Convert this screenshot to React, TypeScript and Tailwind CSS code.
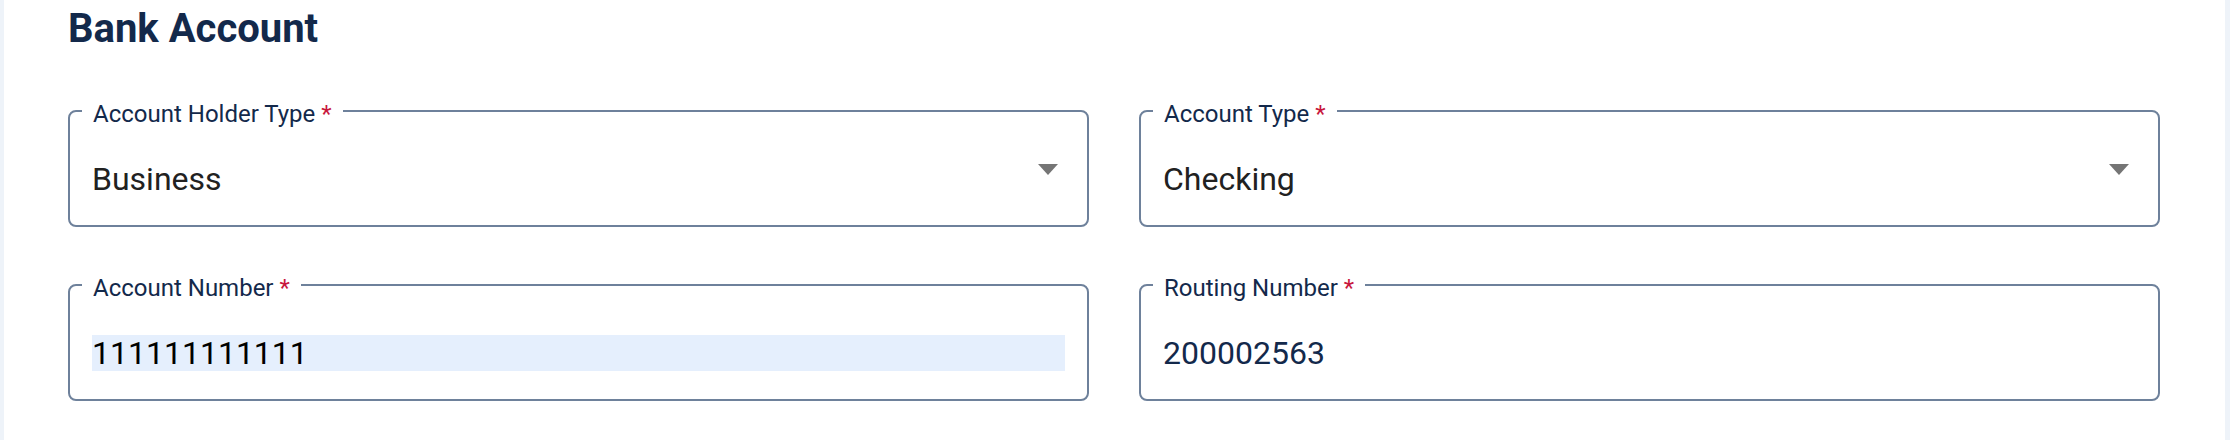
import type { ReactNode } from 'react';

const font = { fontFamily: 'Roboto, "Liberation Sans", sans-serif' };

interface FieldProps {
  label: string;
  children: ReactNode;
  select?: boolean;
}

function Field({ label, children, select = false }: FieldProps) {
  return (
    <div className="relative h-[117px] rounded-[8px] border-2 border-[#6e819b] flex items-start pl-[22px] pr-[29px]">
      <span className="absolute left-[12px] top-[-12px] bg-white px-[11px] text-[24px] leading-[28px] text-[#13294b] whitespace-nowrap">
        {label} <span className="text-[#c8163c]">*</span>
      </span>
      <div className="flex-1 pt-[49px]">{children}</div>
      {select && (
        <svg className="mt-[52px] ml-[8px]" width="20" height="11" viewBox="0 0 20 11">
          <path d="M0 0 L20 0 L10 11 Z" fill="#757575" />
        </svg>
      )}
    </div>
  );
}

export default function App() {
  return (
    <div className="h-[440px] w-full bg-[#eef3f9] pl-[4px] pr-[5px]" style={font}>
      <div className="h-full bg-white pl-[64px] pr-[65px] pt-[5px]">
        <h2 className="text-[40px] leading-[48px] font-bold text-[#13294b]">Bank Account</h2>
        <div className="mt-[57px] grid grid-cols-2 gap-x-[50px] gap-y-[57px]">
          <Field label="Account Holder Type" select>
            <div className="h-[36px] text-[32px] leading-[36px] text-[#212121]">Business</div>
          </Field>
          <Field label="Account Type" select>
            <div className="h-[36px] text-[32px] leading-[36px] text-[#212121]">Checking</div>
          </Field>
          <Field label="Account Number">
            <div className="h-[36px] -mr-[7px] bg-[#e5effd] text-[32px] leading-[36px] text-black">111111111111</div>
          </Field>
          <Field label="Routing Number">
            <div className="h-[36px] text-[32px] leading-[36px] text-[#13294b]">200002563</div>
          </Field>
        </div>
      </div>
    </div>
  );
}
